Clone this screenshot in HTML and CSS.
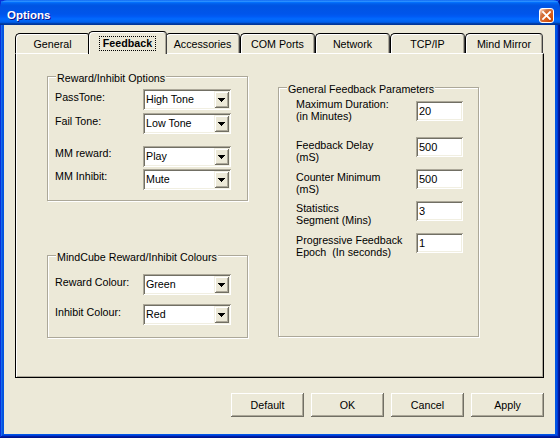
FILE: index.html
```html
<!DOCTYPE html>
<html>
<head>
<meta charset="utf-8">
<title>Options</title>
<link rel="stylesheet" href="styles.css">
</head>
<body>
<div class="window">
  <div class="titlebar">
    <span class="title">Options</span>
    <span class="close"><svg width="9" height="9" viewBox="0 0 9 9"><path d="M1 1L8 8M8 1L1 8" stroke="#fff" stroke-width="1.8" stroke-linecap="square"/></svg></span>
  </div>
  <div class="client">
    <div class="tabs">
      <div class="tab">General</div>
      <div class="tab active"><span class="focus">Feedback</span></div>
      <div class="tab">Accessories</div>
      <div class="tab">COM Ports</div>
      <div class="tab">Network</div>
      <div class="tab">TCP/IP</div>
      <div class="tab wide">Mind Mirror</div>
    </div>
    <div class="panel">
      <div class="col">
        <div class="group g1">
          <div class="legend">Reward/Inhibit Options</div>
          <div class="row">
            <span class="lbl">PassTone:</span>
            <div class="combo"><span class="val">High Tone</span><span class="drop"><svg width="7" height="4" viewBox="0 0 7 4"><path d="M0 0H7V1H6V2H5V3H4V4H3V3H2V2H1V1H0Z" fill="#000"/></svg></span></div>
          </div>
          <div class="row r2">
            <span class="lbl">Fail Tone:</span>
            <div class="combo"><span class="val">Low Tone</span><span class="drop"><svg width="7" height="4" viewBox="0 0 7 4"><path d="M0 0H7V1H6V2H5V3H4V4H3V3H2V2H1V1H0Z" fill="#000"/></svg></span></div>
          </div>
          <div class="row r3">
            <span class="lbl lo">MM reward:</span>
            <div class="combo"><span class="val">Play</span><span class="drop"><svg width="7" height="4" viewBox="0 0 7 4"><path d="M0 0H7V1H6V2H5V3H4V4H3V3H2V2H1V1H0Z" fill="#000"/></svg></span></div>
          </div>
          <div class="row r4">
            <span class="lbl lo">MM Inhibit:</span>
            <div class="combo"><span class="val">Mute</span><span class="drop"><svg width="7" height="4" viewBox="0 0 7 4"><path d="M0 0H7V1H6V2H5V3H4V4H3V3H2V2H1V1H0Z" fill="#000"/></svg></span></div>
          </div>
        </div>
        <div class="group g2">
          <div class="legend">MindCube Reward/Inhibit Colours</div>
          <div class="row">
            <span class="lbl">Reward Colour:</span>
            <div class="combo"><span class="val">Green</span><span class="drop"><svg width="7" height="4" viewBox="0 0 7 4"><path d="M0 0H7V1H6V2H5V3H4V4H3V3H2V2H1V1H0Z" fill="#000"/></svg></span></div>
          </div>
          <div class="row c2">
            <span class="lbl">Inhibit Colour:</span>
            <div class="combo"><span class="val">Red</span><span class="drop"><svg width="7" height="4" viewBox="0 0 7 4"><path d="M0 0H7V1H6V2H5V3H4V4H3V3H2V2H1V1H0Z" fill="#000"/></svg></span></div>
          </div>
        </div>
      </div>
      <div class="group g3">
        <div class="legend">General Feedback Parameters</div>
        <div class="prow p1">
          <span class="plbl">Maximum Duration:<br>(in Minutes)</span>
          <div class="edit">20</div>
        </div>
        <div class="prow p2">
          <span class="plbl">Feedback Delay<br>(mS)</span>
          <div class="edit">500</div>
        </div>
        <div class="prow p3">
          <span class="plbl">Counter Minimum<br>(mS)</span>
          <div class="edit">500</div>
        </div>
        <div class="prow p4">
          <span class="plbl">Statistics<br>Segment (Mins)</span>
          <div class="edit">3</div>
        </div>
        <div class="prow p5">
          <span class="plbl">Progressive Feedback<br>Epoch&nbsp; (In seconds)</span>
          <div class="edit">1</div>
        </div>
      </div>
    </div>
    <div class="buttons">
      <button class="btn">Default</button>
      <button class="btn">OK</button>
      <button class="btn">Cancel</button>
      <button class="btn">Apply</button>
    </div>
  </div>
</div>
</body>
</html>
```

FILE: styles.css
```css
html, body {
  margin: 0;
  padding: 0;
}
body {
  width: 560px;
  height: 438px;
  overflow: hidden;
  background: #ffffff;
  font-family: "Liberation Sans", Arial, sans-serif;
  font-size: 10.7px;
  color: #000;
}
.window {
  width: 560px;
  height: 438px;
  box-sizing: border-box;
  display: flex;
  flex-direction: column;
  background: #0054e3;
  box-shadow: inset -1px -1px #00138c, inset 1px 1px #0831d9, inset -2px -2px #001ea0, inset 2px 2px #166aee, inset -3px -3px #003bda, inset 3px 3px #0855dd;
}
.titlebar {
  flex: none;
  height: 25px;
  display: flex;
  align-items: flex-start;
  justify-content: space-between;
  padding: 0 6px 0 7px;
  border-radius: 7px 7px 0 0;
  background: linear-gradient(to bottom, #0058ee 0%, #3593ff 4%, #288eff 6%, #127dff 8%, #036ffc 10%, #0262ee 14%, #0057e5 20%, #0054e3 24%, #0055eb 56%, #005bf5 66%, #026afe 76%, #0062ef 86%, #0052d6 92%, #0040ab 94%, #003092 100%);
}
.title {
  color: #fff;
  font-weight: bold;
  font-size: 11.5px;
  line-height: 13px;
  padding-top: 9px;
  text-shadow: 1px 1px #0f1089;
}
.close {
  width: 15px;
  height: 15px;
  margin-top: 8px;
  box-sizing: border-box;
  border: 1px solid #fff;
  border-radius: 3px;
  display: flex;
  align-items: center;
  justify-content: center;
  background: radial-gradient(circle at 90% 90%, #cc4600 0%, #dc6527 55%, #cd7546 70%, #ffccb2 90%, #fff 100%);
}
.client {
  flex: 1;
  margin: 0 5px 4px 4px;
  background: #ece9d8;
  padding: 6px 0 0 11px;
}
.tabs {
  display: flex;
  align-items: flex-start;
  height: 23px;
  margin-bottom: -1px;
}
.tab {
  box-sizing: border-box;
  width: 75px;
  height: 20px;
  margin-top: 2px;
  padding-top: 2px;
  background: #ece9d8;
  border: 1px solid #000;
  border-right-color: #404040;
  border-bottom: none;
  border-radius: 5px 4px 0 0;
  box-shadow: inset 1px 1px #fff, inset -1px 0 #aca899;
  display: flex;
  align-items: center;
  justify-content: center;
  line-height: 13px;
}
.tab.wide {
  width: 78px;
}
.tab.active {
  position: relative;
  z-index: 2;
  width: 79px;
  height: 23px;
  margin: 0 -2px;
  padding-top: 1px;
  font-weight: bold;
}
.focus {
  border: 1px dotted #000;
  padding: 0 3px;
  line-height: 13px;
}
.panel {
  box-sizing: border-box;
  width: 529px;
  height: 325px;
  background: #ece9d8;
  border: 1px solid #000;
  border-top-color: #fff;
  box-shadow: inset 1px 0 #fff, inset -1px -1px #aca899;
  display: flex;
  align-items: flex-start;
  padding-left: 31px;
}
.col {
  display: flex;
  flex-direction: column;
  margin-top: 22px;
}
.group {
  position: relative;
  box-sizing: border-box;
  width: 201px;
  border: 1px solid #aca899;
  box-shadow: inset 1px 1px #fff, 1px 1px #fff;
}
.legend {
  position: absolute;
  top: -5px;
  left: 8px;
  padding: 0 1px;
  background: #ece9d8;
  line-height: 13px;
  white-space: nowrap;
}
.g1 {
  height: 125px;
  padding: 12px 0 0 7px;
}
.g2 {
  height: 83px;
  margin-top: 54px;
  padding: 18px 0 0 7px;
}
.g3 {
  height: 250px;
  margin: 33px 0 0 30px;
  padding: 10px 0 0 17px;
}
.row {
  display: flex;
  align-items: flex-start;
}
.r2 { margin-top: 3px; }
.r3 { margin-top: 12px; }
.r4 { margin-top: 2px; }
.c2 { margin-top: 9px; }
.lbl {
  width: 88px;
  padding-top: 2px;
  line-height: 13px;
}
.lbl.lo {
  padding-top: 1px;
}
.combo {
  box-sizing: border-box;
  width: 88px;
  height: 21px;
  padding: 2px;
  background: #fff;
  display: flex;
  align-items: center;
  box-shadow: inset 1px 1px #aca899, inset -1px -1px #fff, inset 2px 2px #716f64, inset -2px -2px #f1efe2;
}
.val {
  flex: 1;
  padding-left: 1px;
  line-height: 13px;
}
.drop {
  box-sizing: border-box;
  width: 15px;
  height: 17px;
  background: #ece9d8;
  display: flex;
  align-items: center;
  justify-content: center;
  box-shadow: inset 1px 1px #f1efe2, inset -1px -1px #716f64, inset 2px 2px #fff, inset -2px -2px #aca899;
}
.prow {
  display: flex;
  align-items: flex-start;
}
.plbl {
  width: 120px;
  line-height: 12px;
  white-space: nowrap;
}
.p1 .edit { margin-top: 3px; }
.p2 { margin-top: 15px; }
.p2 .plbl { padding-top: 2px; }
.p3 { margin-top: 6px; }
.p3 .plbl { padding-top: 2px; }
.p4 { margin-top: 6px; }
.p4 .plbl { padding-top: 1px; }
.p5 { margin-top: 7px; }
.p5 .plbl { padding-top: 1px; }
.edit {
  box-sizing: border-box;
  width: 47px;
  height: 20px;
  padding-left: 3px;
  background: #fff;
  display: flex;
  align-items: center;
  line-height: 13px;
  font-size: 11px;
  box-shadow: inset 1px 1px #aca899, inset -1px -1px #fff, inset 2px 2px #716f64, inset -2px -2px #f1efe2;
}
.buttons {
  width: 529px;
  margin-top: 15px;
  display: flex;
  justify-content: flex-end;
  gap: 7px;
}
.btn {
  box-sizing: border-box;
  width: 73px;
  height: 24px;
  padding: 0;
  border: none;
  background: #ece9d8;
  font: inherit;
  color: #000;
  box-shadow: inset -1px -1px #716f64, inset 1px 1px #fff, inset -2px -2px #aca899;
}
```
